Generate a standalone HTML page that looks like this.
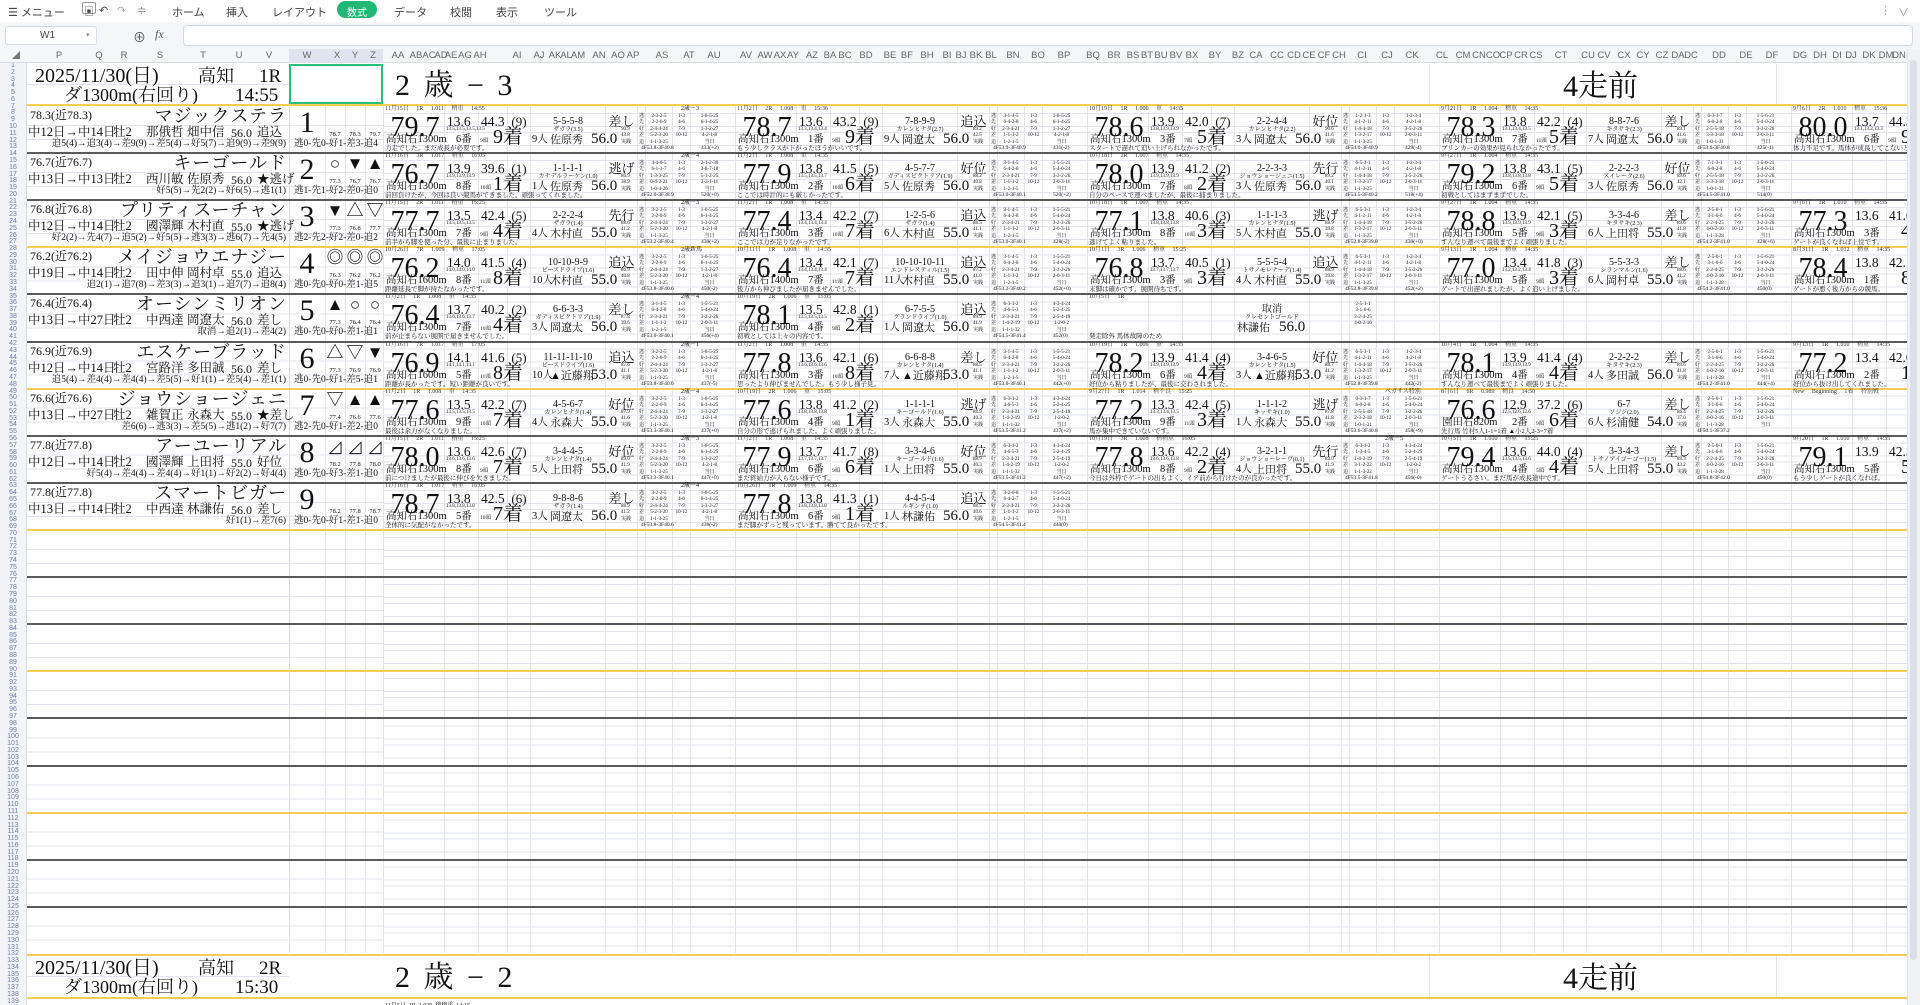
<!DOCTYPE html>
<html lang="ja"><head><meta charset="utf-8">
<style>
*{margin:0;padding:0;box-sizing:border-box}
html,body{width:1920px;height:1005px;overflow:hidden;background:#fff}
body{font-family:"Liberation Serif","Noto Serif CJK SC",serif;color:#111;position:relative}
.ui{font-family:"Liberation Sans","Noto Sans CJK JP",sans-serif}
.abs{position:absolute}
#tb{position:absolute;left:0;top:0;width:1920px;height:22px;background:#fff;font-size:11px;color:#444}
#tb span{position:absolute;top:4px;white-space:nowrap}
#fb{position:absolute;left:0;top:22px;width:1920px;height:27px;background:#f5f6f8}
#ch{position:absolute;left:0;top:49px;width:1920px;height:14px;background:#f5f6f8;border-bottom:1px solid #d8dce4;font-size:9.5px;color:#666}
#ch span{position:absolute;top:1px;transform:translateX(-50%);white-space:nowrap}
#rn{position:absolute;left:0;top:63px;width:27px;height:942px;background:#f3f4f7;border-right:1px solid #d8dce4;font-family:"Liberation Sans",sans-serif;font-size:7px;line-height:6.78px;color:#6b7ea6;text-align:center;overflow:hidden}
#sh{position:absolute;left:27px;top:63px;width:1880px;height:942px;overflow:hidden}
.rbg{position:absolute;left:356px;top:42px;width:1524px;height:848px;
background:
repeating-linear-gradient(180deg,transparent 0 8px,#e1e5ee 8px 9px,transparent 9px 21px,#e1e5ee 21px 22px,transparent 22px 27px,#e1e5ee 27px 28px,transparent 28px 40px,#e1e5ee 40px 41px,transparent 41px 47.1px),
repeating-linear-gradient(90deg,#dfe3ec 0 1px,transparent 1px 61px,#e1e5ee 61px 62px,transparent 62px 95px,#e1e5ee 95px 96px,transparent 96px 124px,#e1e5ee 124px 125px,transparent 125px 147px,#e1e5ee 147px 148px,transparent 148px 222px,#e1e5ee 222px 223px,transparent 223px 254px,#e1e5ee 254px 255px,transparent 255px 262px,#e1e5ee 262px 263px,transparent 263px 289px,#e1e5ee 289px 290px,transparent 290px 307px,#e1e5ee 307px 308px,transparent 308px 352px)}
.lbg{position:absolute;left:0;top:42px;width:356px;height:848px;
background:
repeating-linear-gradient(180deg,transparent 0 20px,#e1e5ee 20px 21px,transparent 21px 34px,#e1e5ee 34px 35px,transparent 35px 47.1px),
linear-gradient(90deg,transparent 0 262px,#d6dbe6 262px 263px,transparent 263px 298px,#e1e5ee 298px 299px,transparent 299px 318px,#e1e5ee 318px 319px,transparent 319px 338px,#e1e5ee 338px 339px,transparent 339px)}
.sep{position:absolute;left:0;width:1880px;height:2px;background:#5a5a5a}
.yel{position:absolute;left:0;width:1880px;height:2px;background:#f7cd5a}
.L{position:absolute;left:0;width:356px;height:47px}
.L span{position:absolute;white-space:nowrap;line-height:1}
.rt{left:3px;top:4px;font-size:12px}
.nm{left:70px;width:190px;text-align:right;top:2px;font-size:18px;letter-spacing:1px}
.i0{left:1px;top:21px;font-size:12.5px}.i1{left:86px;top:21px;font-size:12.5px}.i2{left:119px;top:21px;font-size:12.5px}.i3{left:160px;top:21px;font-size:12.5px}.i4{left:204px;top:22px;font-size:12px}.i5{left:230px;top:21px;font-size:12.5px}
.hs{left:0;width:259px;text-align:right;top:35px;font-size:9.5px}
.hr{left:262px;width:94px;text-align:center;top:35px;font-size:9.5px}
.no{left:262px;width:36px;text-align:center;top:3px;font-size:30px}
.m1,.m2,.m3{top:3px;width:20px;text-align:center;font-size:17px}
.m1{left:298px}.m2{left:318px}.m3{left:338px}
.v1,.v2,.v3{top:27px;width:20px;text-align:center;font-size:6.5px}
.v1{left:298px}.v2{left:318px}.v3{left:338px}
.b{position:absolute;width:352px;height:47px;overflow:hidden}
.b i,.b b,.b span{position:absolute;white-space:nowrap;line-height:1;font-style:normal;font-weight:normal}
.b .t{top:1px;left:2px;font-size:6px;color:#333;word-spacing:6px}
.b .r{top:1px;left:298px;font-size:6px}
.b .g{left:3px;top:9px;font-size:28px;width:58px;text-align:center}
.b .a1{left:64px;top:10px;font-size:13.5px}
.b .a2{left:98px;top:10px;font-size:13.5px}
.b .a3{left:125px;top:10px;font-size:13px;width:22px;text-align:center}
.b .a4{left:148px;top:12px;font-size:10px;width:74px;text-align:center}
.b .a5{left:223px;top:10px;font-size:13px;width:31px;text-align:center}
.b .s{left:63px;top:22px;font-size:5px}
.b .hn{left:148px;top:22px;font-size:6px;width:74px;text-align:center}
.b .p{left:110px;top:22px;font-size:20px}
.b .c{left:3px;top:30px;font-size:10.5px}
.b .n{left:73px;top:30px;font-size:10.5px}
.b .hd{left:97px;top:34px;font-size:5.5px}
.b .j{left:149px;top:30px;font-size:10.5px}
.b .k{left:167px;top:30px;font-size:11px}
.b .w{left:208px;top:27px;font-size:15px}
.b .x{left:238px;top:22px;font-size:5px;line-height:6.3px}
.b .q0,.b .q1,.b .q2,.b .q3{top:9px;font-size:5px;line-height:6.4px;text-align:center}
.b .q0{left:255px;width:7px}.b .q1{left:263px;width:26px}.b .q2{left:290px;width:17px}.b .q3{left:308px;width:37px}
.b .m{left:2px;top:41px;font-size:6.5px}
.b .f{left:258px;top:41px;font-size:5.5px}
.b .f2{left:318px;top:41px;font-size:5.5px}
.rh{position:absolute;left:0;width:1880px;height:42px;background:#fff}
.rh span{position:absolute;white-space:nowrap;line-height:1}
</style></head><body>

<div id="tb" class="ui">
<span style="left:8px">☰ メニュー</span>
<span style="left:82px;top:2px;font-size:10px;border:1px solid #999;border-radius:2px;padding:0 1px;height:12px">▣</span>
<span style="left:99px">↶</span><span style="left:117px;color:#aaa">↷</span><span style="left:137px;color:#999">≑</span>
<span style="left:172px">ホーム</span><span style="left:226px">挿入</span><span style="left:272px">レイアウト</span>
<span style="left:337px;top:1px;width:40px;height:17px;border-radius:9px;background:#21b875;color:#fff;text-align:center;padding-top:3px;font-size:10px">数式</span>
<span style="left:394px">データ</span><span style="left:450px">校閲</span><span style="left:496px">表示</span><span style="left:544px">ツール</span>
<span style="left:1880px;color:#aaa">⋮</span><span style="left:1898px;color:#999">∨</span>
</div>

<div id="fb" class="ui">
<div class="abs" style="left:5px;top:4px;width:92px;height:19px;background:#fff;border:1px solid #d8dce4;border-radius:3px;font-size:10px;color:#444;padding:3px 0 0 34px">W1<span style="position:absolute;left:80px;top:4px;font-size:7px;color:#888">▾</span></div>
<div class="abs" style="left:133px;top:5px;font-size:13px;color:#555">⊕</div>
<div class="abs" style="left:155px;top:5px;font-size:12px;color:#555;font-style:italic;font-family:'Liberation Serif',serif">fx</div>
<div class="abs" style="left:183px;top:3px;width:1730px;height:21px;background:#fff;border:1px solid #d3d8e2;border-radius:4px"></div>
</div>

<div id="ch" class="ui">
<div class="abs" style="left:289px;top:0;width:94px;height:14px;background:#dfe4ee"></div>
<span style="left:16px;color:#777;font-size:8px">◢</span>
<span style="left:59px">P</span><span style="left:99px">Q</span><span style="left:124px">R</span><span style="left:160px">S</span><span style="left:203px">T</span><span style="left:239px">U</span><span style="left:269px">V</span><span style="left:307px">W</span><span style="left:337px">X</span><span style="left:355px">Y</span><span style="left:373px">Z</span>
<span style="left:398px">AA</span><span style="left:416px">AB</span><span style="left:429px">AC</span><span style="left:441px">AD</span><span style="left:451px">AE</span><span style="left:465px">AG</span><span style="left:480px">AH</span><span style="left:517px">AI</span><span style="left:539px">AJ</span><span style="left:555px">AK</span><span style="left:566px">AL</span><span style="left:578px">AM</span><span style="left:599px">AN</span><span style="left:618px">AO</span><span style="left:633px">AP</span><span style="left:662px">AS</span><span style="left:689px">AT</span><span style="left:714px">AU</span><span style="left:746px">AV</span><span style="left:765px">AW</span><span style="left:780px">AX</span><span style="left:793px">AY</span><span style="left:812px">AZ</span><span style="left:830px">BA</span><span style="left:845px">BC</span><span style="left:866px">BD</span><span style="left:890px">BE</span><span style="left:907px">BF</span><span style="left:927px">BH</span><span style="left:947px">BI</span><span style="left:961px">BJ</span><span style="left:976px">BK</span><span style="left:991px">BL</span><span style="left:1013px">BN</span><span style="left:1038px">BO</span><span style="left:1064px">BP</span><span style="left:1093px">BQ</span><span style="left:1114px">BR</span><span style="left:1133px">BS</span><span style="left:1147px">BT</span><span style="left:1161px">BU</span><span style="left:1176px">BV</span><span style="left:1192px">BX</span><span style="left:1215px">BY</span><span style="left:1238px">BZ</span><span style="left:1256px">CA</span><span style="left:1277px">CC</span><span style="left:1294px">CD</span><span style="left:1309px">CE</span><span style="left:1324px">CF</span><span style="left:1339px">CH</span><span style="left:1362px">CI</span><span style="left:1387px">CJ</span><span style="left:1412px">CK</span><span style="left:1442px">CL</span><span style="left:1463px">CM</span><span style="left:1479px">CN</span><span style="left:1493px">CO</span><span style="left:1506px">CP</span><span style="left:1521px">CR</span><span style="left:1536px">CS</span><span style="left:1561px">CT</span><span style="left:1588px">CU</span><span style="left:1604px">CV</span><span style="left:1624px">CX</span><span style="left:1643px">CY</span><span style="left:1662px">CZ</span><span style="left:1678px">DA</span><span style="left:1691px">DC</span><span style="left:1719px">DD</span><span style="left:1746px">DE</span><span style="left:1772px">DF</span><span style="left:1800px">DG</span><span style="left:1820px">DH</span><span style="left:1837px">DI</span><span style="left:1851px">DJ</span><span style="left:1869px">DK</span><span style="left:1886px">DM</span><span style="left:1899px">DN</span>
</div>

<div id="rn">1<br>2<br>3<br>4<br>5<br>6<br>7<br>8<br>9<br>10<br>11<br>12<br>13<br>14<br>15<br>16<br>17<br>18<br>19<br>20<br>21<br>22<br>23<br>24<br>25<br>26<br>27<br>28<br>29<br>30<br>31<br>32<br>33<br>34<br>35<br>36<br>37<br>38<br>39<br>40<br>41<br>42<br>43<br>44<br>45<br>46<br>47<br>48<br>49<br>50<br>51<br>52<br>53<br>54<br>55<br>56<br>57<br>58<br>59<br>60<br>61<br>62<br>63<br>64<br>65<br>66<br>67<br>68<br>69<br>70<br>71<br>72<br>73<br>74<br>75<br>76<br>77<br>78<br>79<br>80<br>81<br>82<br>83<br>84<br>85<br>86<br>87<br>88<br>89<br>90<br>91<br>92<br>93<br>94<br>95<br>96<br>97<br>98<br>99<br>100<br>101<br>102<br>103<br>104<br>105<br>106<br>107<br>108<br>109<br>110<br>111<br>112<br>113<br>114<br>115<br>116<br>117<br>118<br>119<br>120<br>121<br>122<br>123<br>124<br>125<br>126<br>127<br>128<br>129<br>130<br>131<br>132<br>133<br>134<br>135<br>136<br>137<br>138<br>139</div>

<div id="sh">
<div class="lbg"></div><div class="rbg"></div>

<div class="rh" style="top:1px">
<div class="abs" style="left:0;top:20px;width:262px;height:1px;background:#e1e5ee"></div>
<div class="abs" style="left:1402px;top:0;width:1px;height:41px;background:#e1e5ee"></div>
<div class="abs" style="left:1749px;top:0;width:1px;height:41px;background:#e1e5ee"></div>
<span style="left:8px;top:2px;font-size:20px">2025/11/30(日)</span>
<span style="left:171px;top:3px;font-size:18px">高知</span>
<span style="left:232px;top:3px;font-size:19px">1R</span>
<span style="left:37px;top:22px;font-size:18px">ダ1300m(右回り)</span>
<span style="left:208px;top:22px;font-size:19px">14:55</span>
<span style="left:368px;top:7px;font-size:30px;letter-spacing:3px">2 歳 − 3</span>
<span style="left:1536px;top:8px;font-size:30px">4走前</span>
<div class="abs" style="left:262px;top:0;width:94px;height:40px;border:2px solid #2cbf7c"></div>
</div>

<div class="rh" style="top:893px">
<div class="abs" style="left:0;top:20px;width:262px;height:1px;background:#e1e5ee"></div>
<div class="abs" style="left:1402px;top:0;width:1px;height:41px;background:#e1e5ee"></div>
<div class="abs" style="left:1749px;top:0;width:1px;height:41px;background:#e1e5ee"></div>
<span style="left:8px;top:2px;font-size:20px">2025/11/30(日)</span>
<span style="left:171px;top:3px;font-size:18px">高知</span>
<span style="left:232px;top:3px;font-size:19px">2R</span>
<span style="left:37px;top:22px;font-size:18px">ダ1300m(右回り)</span>
<span style="left:208px;top:22px;font-size:19px">15:30</span>
<span style="left:368px;top:7px;font-size:30px;letter-spacing:3px">2 歳 − 2</span>
<span style="left:1536px;top:8px;font-size:30px">4走前</span>
</div>
<div class="abs" style="left:358px;top:937px;font-size:6px;white-space:nowrap">11月5日 &nbsp;1R &nbsp;1.029 &nbsp;稍稍重 &nbsp;14:15</div>

<div class="yel" style="top:41px"></div>
<div class="sep" style="top:89px"></div>
<div class="sep" style="top:136px"></div>
<div class="yel" style="top:183px"></div>
<div class="sep" style="top:230px"></div>
<div class="sep" style="top:278px"></div>
<div class="yel" style="top:325px"></div>
<div class="sep" style="top:372px"></div>
<div class="sep" style="top:419px"></div>
<div class="yel" style="top:466px"></div>
<div class="sep" style="top:513px"></div>
<div class="sep" style="top:560px"></div>
<div class="yel" style="top:607px"></div>
<div class="sep" style="top:654px"></div>
<div class="sep" style="top:702px"></div>
<div class="yel" style="top:749px"></div>
<div class="sep" style="top:796px"></div>
<div class="sep" style="top:843px"></div>
<div class="yel" style="top:891px"></div>
<div class="yel" style="top:934px"></div>

<!-- Horse 1 -->
<div class="L" style="top:42px"><span class="rt">78.3(近78.3)</span><span class="nm">マジックステラ</span><span class="i0">中12日→中14日</span><span class="i1">牡2</span><span class="i2">那俄哲</span><span class="i3">畑中信</span><span class="i4">56.0</span><span class="i5">追込</span><span class="hs">追5(4)→追3(4)→差9(9)→差5(4)→好5(7)→追9(9)→差9(9)</span><span class="hr">逃0-先0-好1-差3-追4</span><span class="no">1</span><span class="v1">78.7</span><span class="v2">78.3</span><span class="v3">79.7</span></div>
<div class="b" style="left:356px;top:42px"><i class="t">11月15日 1R 1.011 稍重 14:55</i><i class="r">2歳－3</i><b class="g">79.7</b><span class="a1">13.6</span><span class="a2">44.3</span><span class="a3">(9)</span><span class="a4">5-5-5-8</span><span class="a5">差し</span><i class="s">13.5,13.5,13.5,13.5</i><i class="hn">ザガラ(3.5)</i><b class="p">9着</b><span class="c">高知右1300m</span><span class="n">6番</span><i class="hd">9頭</i><span class="j">9人</span><span class="k">佐原秀</span><span class="w">56.0</span><i class="x">90.9<br>43.8<br>実践</i><i class="q0">逃<br>先<br>好<br>差<br>追</i><i class="q1">2-3-2-5<br>2-2-6-9<br>2-4-4-24<br>5-2-3-20<br>1-1-3-25</i><i class="q2">1-3<br>4-6<br>7-9<br>10-12</i><i class="q3">1-6-5-25<br>6-1-4-25<br>1-3-2-27<br>4-2-1-8<br>当日</i><i class="m">力走でした。まだ成長が必要です。</i><i class="f">4F53.8-3F40.8</i><i class="f2">433(+2)</i></div>
<div class="b" style="left:708px;top:42px"><i class="t">11月2日 2R 1.008 重 15:36</i><b class="g">78.7</b><span class="a1">13.6</span><span class="a2">43.2</span><span class="a3">(9)</span><span class="a4">7-8-9-9</span><span class="a5">追込</span><i class="s">13.3,13.4,13.4</i><i class="hn">カレンヒナタ(2.7)</i><b class="p">9着</b><span class="c">高知右1300m</span><span class="n">1番</span><i class="hd">9頭</i><span class="j">9人</span><span class="k">岡遼太</span><span class="w">56.0</span><i class="x">89.2<br>42.5<br>実践</i><i class="q0">逃<br>先<br>好<br>差<br>追</i><i class="q1">3-1-4-5<br>6-4-2-8<br>2-3-4-21<br>1-1-1-2<br>1-2-1-5</i><i class="q2">1-3<br>4-6<br>7-9<br>10-12</i><i class="q3">1-6-5-25<br>6-1-4-25<br>1-3-2-27<br>4-2-1-8<br>当日</i><i class="m">もう少しクラスが下がったほうがいいです。</i><i class="f">4F53.9-3F40.9</i><i class="f2">431(-2)</i></div>
<div class="b" style="left:1060px;top:42px"><i class="t">10月19日 1R 1.006 重 14:35</i><b class="g">78.6</b><span class="a1">13.9</span><span class="a2">42.0</span><span class="a3">(7)</span><span class="a4">2-2-4-4</span><span class="a5">好位</span><i class="s">13.8,13.9,13.9</i><i class="hn">カレンヒナタ(2.2)</i><b class="p">5着</b><span class="c">高知右1300m</span><span class="n">3番</span><i class="hd">7頭</i><span class="j">3人</span><span class="k">岡遼太</span><span class="w">56.0</span><i class="x">90.6<br>41.6<br>実践</i><i class="q0">逃<br>先<br>好<br>差<br>追</i><i class="q1">1-2-1-3<br>4-1-2-11<br>1-4-4-18<br>1-3-2-17<br>1-1-3-25</i><i class="q2">1-3<br>4-6<br>7-9<br>10-12</i><i class="q3">1-2-3-4<br>4-2-1-8<br>3-5-2-26<br>2-0-3-11<br>当日</i><i class="m">スタートで遅れて追い上げられなかったです。</i><i class="f">4F54.0-3F40.9</i><i class="f2">429(-4)</i></div>
<div class="b" style="left:1412px;top:42px"><i class="t">9月21日 1R 1.004 稍重 14:35</i><b class="g">78.3</b><span class="a1">13.8</span><span class="a2">42.2</span><span class="a3">(4)</span><span class="a4">8-8-7-6</span><span class="a5">差し</span><i class="s">13.1,13.4,13.5</i><i class="hn">キタサキ(2.3)</i><b class="p">5着</b><span class="c">高知右1300m</span><span class="n">7番</span><i class="hd">11頭</i><span class="j">7人</span><span class="k">岡遼太</span><span class="w">56.0</span><i class="x">89.1<br>41.6<br>実践</i><i class="q0">逃<br>先<br>好<br>差<br>追</i><i class="q1">6-3-1-7<br>6-0-2-8<br>2-5-5-18<br>3-3-3-18<br>1-0-1-31</i><i class="q2">1-3<br>4-6<br>7-9<br>10-12</i><i class="q3">1-5-6-21<br>5-4-0-24<br>3-2-2-26<br>2-0-3-11<br>当日</i><i class="m">ブリンカーの効果が見られなかったです。</i><i class="f">4F53.6-3F40.8</i><i class="f2">425(-1)</i></div>
<div class="b" style="left:1764px;top:42px"><i class="t">9月6日 2R 1.010 稍重 15:36</i><b class="g">80.0</b><span class="a1">13.7</span><span class="a2">44.3</span><span class="a3">(6)</span><span class="a4">6-6-6-6</span><span class="a5">差し</span><i class="s">13.1,13.2,13.3</i><i class="hn">ペガサス(2.1)</i><b class="p">9着</b><span class="c">高知右1300m</span><span class="n">6番</span><i class="hd">9頭</i><i class="m">体力不足です。馬体が成長してこないと</i></div>

<!-- Horse 2 -->
<div class="L" style="top:89px"><span class="rt">76.7(近76.7)</span><span class="nm">キーゴールド</span><span class="i0">中13日→中13日</span><span class="i1">牡2</span><span class="i2">西川敏</span><span class="i3">佐原秀</span><span class="i4">56.0</span><span class="i5">★逃げ</span><span class="hs">好5(5)→先2(2)→好6(5)→逃1(1)</span><span class="hr">逃1-先1-好2-差0-追0</span><span class="no">2</span><span class="m1">○</span><span class="m2">▼</span><span class="m3">▲</span><span class="v1">77.3</span><span class="v2">76.7</span><span class="v3">76.7</span></div>
<div class="b" style="left:356px;top:89px"><i class="t">11月16日 3R 1.017 稍重 16:05</i><i class="r">2歳－4</i><b class="g">76.7</b><span class="a1">13.9</span><span class="a2">39.6</span><span class="a3">(1)</span><span class="a4">1-1-1-1</span><span class="a5">逃げ</span><i class="s">13.9,13.9,13.9</i><i class="hn">カナデルラーケン(1.0)</i><b class="p">1着</b><span class="c">高知右1300m</span><span class="n">8番</span><i class="hd">10頭</i><span class="j">1人</span><span class="k">佐原秀</span><span class="w">56.0</span><i class="x">86.9<br>38.9<br>実践</i><i class="q0">逃<br>先<br>好<br>差<br>追</i><i class="q1">4-4-0-5<br>6-1-3-7<br>1-3-3-25<br>0-4-2-21<br>1-0-4-26</i><i class="q2">1-3<br>4-6<br>7-9<br>10-12</i><i class="q3">2-1-2-30<br>3-8-7-18<br>5-1-2-25<br>2-2-1-11<br>当日</i><i class="m">前回負けたが、今回は良い競馬ができました。頑張ってくれました。</i><i class="f">4F52.0-3F38.9</i><i class="f2">520(+0)</i></div>
<div class="b" style="left:708px;top:89px"><i class="t">11月2日 1R 1.008 重 14:35</i><b class="g">77.9</b><span class="a1">13.8</span><span class="a2">41.5</span><span class="a3">(5)</span><span class="a4">4-5-7-7</span><span class="a5">好位</span><i class="s">13.5,13.5,13.7</i><i class="hn">ガディスビクトリア(1.9)</i><b class="p">6着</b><span class="c">高知右1300m</span><span class="n">2番</span><i class="hd">10頭</i><span class="j">5人</span><span class="k">佐原秀</span><span class="w">56.0</span><i class="x">88.2<br>40.8<br>実践</i><i class="q0">逃<br>先<br>好<br>差<br>追</i><i class="q1">3-1-4-5<br>6-4-2-8<br>2-3-4-21<br>1-1-1-2<br>1-2-1-5</i><i class="q2">1-3<br>4-6<br>7-9<br>10-12</i><i class="q3">1-5-5-21<br>5-4-0-24<br>3-2-2-26<br>2-0-3-11<br>当日</i><i class="m">ここでは時計的にも厳しかったです。</i><i class="f">4F53.0-3F40.1</i><i class="f2">520(+2)</i></div>
<div class="b" style="left:1060px;top:89px"><i class="t">10月18日 2R 1.007 稍重 14:35</i><b class="g">78.0</b><span class="a1">13.9</span><span class="a2">41.2</span><span class="a3">(2)</span><span class="a4">2-2-3-3</span><span class="a5">先行</span><i class="s">13.9,13.9,13.9</i><i class="hn">ジョウショージェニ(1.5)</i><b class="p">2着</b><span class="c">高知右1300m</span><span class="n">7番</span><i class="hd">8頭</i><span class="j">3人</span><span class="k">佐原秀</span><span class="w">56.0</span><i class="x">89.2<br>40.1<br>実践</i><i class="q0">逃<br>先<br>好<br>差<br>追</i><i class="q1">6-5-3-1<br>4-1-2-11<br>1-4-4-18<br>1-3-2-17<br>1-1-3-25</i><i class="q2">1-3<br>4-6<br>7-9<br>10-12</i><i class="q3">1-2-3-4<br>4-2-1-8<br>3-5-2-26<br>2-0-3-11<br>当日</i><i class="m">自分のペースで運べましたが、最後に捕まりました。</i><i class="f">4F53.5-3F40.2</i><i class="f2">518(+4)</i></div>
<div class="b" style="left:1412px;top:89px"><i class="t">9月27日 1R 1.004 稍重 14:35</i><b class="g">79.2</b><span class="a1">13.8</span><span class="a2">43.1</span><span class="a3">(5)</span><span class="a4">2-2-2-3</span><span class="a5">好位</span><i class="s">13.8,13.8,13.8</i><i class="hn">スイレーク(2.6)</i><b class="p">5着</b><span class="c">高知右1300m</span><span class="n">6番</span><i class="hd">9頭</i><span class="j">3人</span><span class="k">佐原秀</span><span class="w">56.0</span><i class="x">89.6<br>42.1<br>実践</i><i class="q0">逃<br>先<br>好<br>差<br>追</i><i class="q1">7-1-3-1<br>6-0-2-8<br>2-5-5-18<br>3-3-3-18<br>1-0-1-31</i><i class="q2">1-3<br>4-6<br>7-9<br>10-12</i><i class="q3">1-5-6-21<br>5-4-0-24<br>3-2-2-26<br>2-0-3-11<br>当日</i><i class="m">初戦としてはまずまずでした。</i><i class="f">4F54.5-3F41.0</i><i class="f2">514(0)</i></div>

<!-- Horse 3 -->
<div class="L" style="top:136px"><span class="rt">76.8(近76.8)</span><span class="nm">プリティスーチャン</span><span class="i0">中12日→中14日</span><span class="i1">牡2</span><span class="i2">國澤輝</span><span class="i3">木村直</span><span class="i4">55.0</span><span class="i5">★逃げ</span><span class="hs">好2(2)→先4(7)→追5(2)→好5(5)→逃3(3)→逃6(7)→先4(5)</span><span class="hr">逃2-先2-好2-差0-追2</span><span class="no">3</span><span class="m1">▼</span><span class="m2">△</span><span class="m3">▽</span><span class="v1">77.3</span><span class="v2">76.8</span><span class="v3">77.7</span></div>
<div class="b" style="left:356px;top:136px"><i class="t">11月15日 2R 1.011 稍重 15:25</i><i class="r">2歳－3</i><b class="g">77.7</b><span class="a1">13.5</span><span class="a2">42.4</span><span class="a3">(5)</span><span class="a4">2-2-2-4</span><span class="a5">先行</span><i class="s">13.5,13.5,13.5</i><i class="hn">ザガラ(1.4)</i><b class="p">4着</b><span class="c">高知右1300m</span><span class="n">7番</span><i class="hd">9頭</i><span class="j">4人</span><span class="k">木村直</span><span class="w">55.0</span><i class="x">88.6<br>41.2<br>実践</i><i class="q0">逃<br>先<br>好<br>差<br>追</i><i class="q1">3-2-2-5<br>2-2-0-9<br>2-4-4-24<br>5-2-3-20<br>1-1-3-25</i><i class="q2">1-3<br>4-6<br>7-9<br>10-12</i><i class="q3">1-6-5-25<br>6-1-4-25<br>1-3-2-27<br>4-2-1-8<br>当日</i><i class="m">前半から脚を使った分、最後に止まりました。</i><i class="f">4F53.2-3F40.4</i><i class="f2">430(+2)</i></div>
<div class="b" style="left:708px;top:136px"><i class="t">11月2日 1R 1.008 重 14:35</i><b class="g">77.4</b><span class="a1">13.4</span><span class="a2">42.2</span><span class="a3">(7)</span><span class="a4">1-2-5-6</span><span class="a5">追込</span><i class="s">13.4,13.4,13.4</i><i class="hn">ザガラ(1.4)</i><b class="p">7着</b><span class="c">高知右1300m</span><span class="n">3番</span><i class="hd">10頭</i><span class="j">6人</span><span class="k">木村直</span><span class="w">55.0</span><i class="x">88.5<br>41.1<br>実践</i><i class="q0">逃<br>先<br>好<br>差<br>追</i><i class="q1">3-1-4-5<br>6-4-2-8<br>2-3-4-21<br>1-1-1-2<br>1-2-1-5</i><i class="q2">1-3<br>4-6<br>7-9<br>10-12</i><i class="q3">1-5-5-21<br>5-4-0-24<br>3-2-2-26<br>2-0-3-11<br>当日</i><i class="m">ここでは力が足りなかったです。</i><i class="f">4F53.0-3F40.1</i><i class="f2">428(-2)</i></div>
<div class="b" style="left:1060px;top:136px"><i class="t">10月18日 1R 1.007 稍重 14:35</i><b class="g">77.1</b><span class="a1">13.8</span><span class="a2">40.6</span><span class="a3">(3)</span><span class="a4">1-1-1-3</span><span class="a5">逃げ</span><i class="s">13.8,13.8,13.8</i><i class="hn">カレンヒナタ(1.5)</i><b class="p">3着</b><span class="c">高知右1300m</span><span class="n">8番</span><i class="hd">10頭</i><span class="j">5人</span><span class="k">木村直</span><span class="w">55.0</span><i class="x">88.9<br>39.8<br>実践</i><i class="q0">逃<br>先<br>好<br>差<br>追</i><i class="q1">6-5-3-1<br>4-1-2-11<br>1-4-4-18<br>1-3-2-17<br>1-1-3-25</i><i class="q2">1-3<br>4-6<br>7-9<br>10-12</i><i class="q3">1-2-3-4<br>4-2-1-8<br>3-5-2-26<br>2-0-3-11<br>当日</i><i class="m">逃げてよく粘りました。</i><i class="f">4F52.8-3F39.8</i><i class="f2">430(+0)</i></div>
<div class="b" style="left:1412px;top:136px"><i class="t">9月27日 1R 1.004 稍重 14:35</i><b class="g">78.8</b><span class="a1">13.9</span><span class="a2">42.1</span><span class="a3">(5)</span><span class="a4">3-3-4-6</span><span class="a5">差し</span><i class="s">13.9,13.9,13.9</i><i class="hn">キタサキ(2.3)</i><b class="p">3着</b><span class="c">高知右1300m</span><span class="n">5番</span><i class="hd">9頭</i><span class="j">6人</span><span class="k">上田将</span><span class="w">55.0</span><i class="x">89.6<br>41.8<br>実践</i><i class="q0">逃<br>先<br>好<br>差<br>追</i><i class="q1">2-5-0-1<br>3-1-0-6<br>2-2-4-25<br>4-0-2-16<br>1-1-3-28</i><i class="q2">1-3<br>4-6<br>7-9<br>10-12</i><i class="q3">1-5-6-21<br>5-4-0-24<br>3-2-2-26<br>2-0-3-11<br>当日</i><i class="m">すんなり運べて最後までよく頑張りました。</i><i class="f">4F54.2-3F41.0</i><i class="f2">428(+6)</i></div>
<div class="b" style="left:1764px;top:136px"><i class="t">9月6日 1R 1.010 稍重 14:35</i><b class="g">77.3</b><span class="a1">13.6</span><span class="a2">41.6</span><span class="a3">(4)</span><span class="a4">2-2-2-2</span><span class="a5">先行</span><span class="c">高知右1300m</span><span class="n">3番</span><b class="p">4着</b><i class="m">ゲートが良くなれば上位です。</i></div>

<!-- Horse 4 -->
<div class="L" style="top:183px"><span class="rt">76.2(近76.2)</span><span class="nm">メイジョウエナジー</span><span class="i0">中19日→中14日</span><span class="i1">牡2</span><span class="i2">田中伸</span><span class="i3">岡村卓</span><span class="i4">55.0</span><span class="i5">追込</span><span class="hs">追2(1)→追7(8)→差3(3)→追3(1)→追7(7)→追8(4)</span><span class="hr">逃0-先0-好0-差1-追5</span><span class="no">4</span><span class="m1">◎</span><span class="m2">◎</span><span class="m3">◎</span><span class="v1">76.3</span><span class="v2">76.2</span><span class="v3">76.2</span></div>
<div class="b" style="left:356px;top:183px"><i class="t">10月26日 7R 1.009 稍重 17:05</i><i class="r">2歳新馬</i><b class="g">76.2</b><span class="a1">14.0</span><span class="a2">41.5</span><span class="a3">(4)</span><span class="a4">10-10-9-9</span><span class="a5">追込</span><i class="s">14.0,14.0,14.0</i><i class="hn">ビースドライブ(1.6)</i><b class="p">8着</b><span class="c">高知右1600m</span><span class="n">8番</span><i class="hd">11頭</i><span class="j">10人</span><span class="k">木村直</span><span class="w">55.0</span><i class="x">86.9<br>40.8<br>実践</i><i class="q0">逃<br>先<br>好<br>差<br>追</i><i class="q1">3-2-2-5<br>2-2-0-9<br>2-4-4-24<br>5-2-3-20<br>1-1-3-25</i><i class="q2">1-3<br>4-6<br>7-9<br>10-12</i><i class="q3">1-6-5-25<br>6-1-4-25<br>1-3-2-27<br>4-2-1-8<br>当日</i><i class="m">距離延長で脚が持たなかったです。</i><i class="f">4F53.8-3F40.6</i><i class="f2">450(-2)</i></div>
<div class="b" style="left:708px;top:183px"><i class="t">10月11日 1R 1.008 重 14:35</i><b class="g">76.4</b><span class="a1">13.4</span><span class="a2">42.1</span><span class="a3">(7)</span><span class="a4">10-10-10-11</span><span class="a5">追込</span><i class="s">13.4,13.4,13.4</i><i class="hn">エンドレスティル(1.5)</i><b class="p">7着</b><span class="c">高知右1400m</span><span class="n">7番</span><i class="hd">11頭</i><span class="j">11人</span><span class="k">木村直</span><span class="w">55.0</span><i class="x">87.2<br>41.0<br>実践</i><i class="q0">逃<br>先<br>好<br>差<br>追</i><i class="q1">3-1-4-5<br>6-4-2-8<br>2-3-4-21<br>1-1-1-2<br>1-2-1-5</i><i class="q2">1-3<br>4-6<br>7-9<br>10-12</i><i class="q3">1-5-5-21<br>5-4-0-24<br>3-2-2-26<br>2-0-3-11<br>当日</i><i class="m">後方から伸びましたが届きませんでした。</i><i class="f">4F53.2-3F40.2</i><i class="f2">452(+0)</i></div>
<div class="b" style="left:1060px;top:183px"><i class="t">10月1日 3R 1.006 稍重 15:25</i><b class="g">76.8</b><span class="a1">13.7</span><span class="a2">40.5</span><span class="a3">(1)</span><span class="a4">5-5-5-4</span><span class="a5">追込</span><i class="s">13.7,13.7,13.7</i><i class="hn">トサノモレナーデ(1.4)</i><b class="p">3着</b><span class="c">高知右1300m</span><span class="n">3番</span><i class="hd">9頭</i><span class="j">4人</span><span class="k">木村直</span><span class="w">55.0</span><i class="x">88.9<br>39.8<br>実践</i><i class="q0">逃<br>先<br>好<br>差<br>追</i><i class="q1">6-5-3-1<br>4-1-2-11<br>1-4-4-18<br>1-3-2-17<br>1-1-3-25</i><i class="q2">1-3<br>4-6<br>7-9<br>10-12</i><i class="q3">1-2-3-4<br>4-2-1-8<br>3-5-2-26<br>2-0-3-11<br>当日</i><i class="m">末脚は確かです。展開待ちです。</i><i class="f">4F52.8-3F39.8</i><i class="f2">452(+2)</i></div>
<div class="b" style="left:1412px;top:183px"><i class="t">9月13日 1R 1.004 稍重 14:35</i><b class="g">77.0</b><span class="a1">13.4</span><span class="a2">41.8</span><span class="a3">(3)</span><span class="a4">5-5-3-3</span><span class="a5">差し</span><i class="s">13.2,13.2,13.4</i><i class="hn">シランマルン(1.6)</i><b class="p">3着</b><span class="c">高知右1300m</span><span class="n">5番</span><i class="hd">9頭</i><span class="j">6人</span><span class="k">岡村卓</span><span class="w">55.0</span><i class="x">88.6<br>41.2<br>実践</i><i class="q0">逃<br>先<br>好<br>差<br>追</i><i class="q1">2-5-0-1<br>3-1-0-6<br>2-2-4-25<br>4-0-2-16<br>1-1-3-28</i><i class="q2">1-3<br>4-6<br>7-9<br>10-12</i><i class="q3">1-5-6-21<br>5-4-0-24<br>3-2-2-26<br>2-0-3-11<br>当日</i><i class="m">ゲートで出遅れましたが、よく追い上げました。</i><i class="f">4F54.2-3F41.0</i><i class="f2">450(0)</i></div>
<div class="b" style="left:1764px;top:183px"><i class="t">8月31日 1R 1.012 稍重 14:35</i><b class="g">78.4</b><span class="a1">13.8</span><span class="a2">42.1</span><span class="a3">(1)</span><span class="a4">9-9-8-8</span><span class="a5">追込</span><span class="c">高知右1300m</span><span class="n">1番</span><b class="p">8着</b><i class="m">ゲートが悪く後方からの競馬。</i></div>

<!-- Horse 5 -->
<div class="L" style="top:230px"><span class="rt">76.4(近76.4)</span><span class="nm">オーシンミリオン</span><span class="i0">中13日→中27日</span><span class="i1">牡2</span><span class="i2">中西達</span><span class="i3">岡遼太</span><span class="i4">56.0</span><span class="i5">差し</span><span class="hs">取消→追2(1)→差4(2)</span><span class="hr">逃0-先0-好0-差1-追1</span><span class="no">5</span><span class="m1">▲</span><span class="m2">○</span><span class="m3">○</span><span class="v1">77.3</span><span class="v2">76.4</span><span class="v3">76.4</span></div>
<div class="b" style="left:356px;top:230px"><i class="t">11月2日 1R 1.008 重 14:35</i><i class="r">2歳－4</i><b class="g">76.4</b><span class="a1">13.7</span><span class="a2">40.2</span><span class="a3">(2)</span><span class="a4">6-6-3-3</span><span class="a5">差し</span><i class="s">13.6,13.6,13.7</i><i class="hn">ガディスビクトリア(1.9)</i><b class="p">4着</b><span class="c">高知右1300m</span><span class="n">7番</span><i class="hd">10頭</i><span class="j">3人</span><span class="k">岡遼太</span><span class="w">56.0</span><i class="x">87.8<br>39.6<br>実践</i><i class="q0">逃<br>先<br>好<br>差<br>追</i><i class="q1">3-1-4-5<br>6-4-2-8<br>2-3-4-21<br>1-1-1-2<br>1-2-1-5</i><i class="q2">1-3<br>4-6<br>7-9<br>10-12</i><i class="q3">1-5-5-21<br>5-4-0-24<br>3-2-2-26<br>2-0-3-11<br>当日</i><i class="m">前が止まらない展開で届きませんでした。</i><i class="f">4F53.0-3F40.1</i><i class="f2">456(+4)</i></div>
<div class="b" style="left:708px;top:230px"><i class="t">10月19日 2R 1.006 重 15:05</i><b class="g">78.1</b><span class="a1">13.5</span><span class="a2">42.8</span><span class="a3">(1)</span><span class="a4">6-7-5-5</span><span class="a5">追込</span><i class="s">13.5,13.5,13.5</i><i class="hn">グランドライブ(1.0)</i><b class="p">2着</b><span class="c">高知右1300m</span><span class="n">4番</span><i class="hd">9頭</i><span class="j">1人</span><span class="k">岡遼太</span><span class="w">56.0</span><i class="x">89.9<br>41.9<br>実践</i><i class="q0">逃<br>先<br>好<br>差<br>追</i><i class="q1">6-3-1-2<br>4-6-5-3<br>2-3-4-21<br>1-4-2-19<br>1-1-1-32</i><i class="q2">1-3<br>4-6<br>7-9<br>10-12</i><i class="q3">4-3-4-24<br>5-2-4-25<br>2-5-4-19<br>1-2-0-2<br>当日</i><i class="m">初戦としては上々の内容です。</i><i class="f">4F54.5-3F41.4</i><i class="f2">452(0)</i></div>
<div class="b" style="left:1060px;top:230px"><i class="t">10月5日 1R</i><span class="a4" style="left:130px;width:110px;top:12px;font-size:10px">取消</span><i class="hn" style="left:130px;width:110px;top:22px">クレセントゴールド</i><span class="k" style="left:150px">林謙佑</span><span class="w" style="left:192px">56.0</span><i class="q1" style="left:263px">2-5-1-1<br>3-1-0-6<br>2-2-4-25<br>4-0-2-16</i><i class="m">発走除外 馬体故障のため</i></div>

<!-- Horse 6 -->
<div class="L" style="top:278px"><span class="rt">76.9(近76.9)</span><span class="nm">エスケーブラッド</span><span class="i0">中12日→中14日</span><span class="i1">牡2</span><span class="i2">宮路洋</span><span class="i3">多田誠</span><span class="i4">56.0</span><span class="i5">差し</span><span class="hs">追5(4)→差4(4)→差4(4)→差5(5)→好1(1)→差5(4)→差1(1)</span><span class="hr">逃0-先0-好1-差5-追1</span><span class="no">6</span><span class="m1">△</span><span class="m2">▽</span><span class="m3">▼</span><span class="v1">77.3</span><span class="v2">76.9</span><span class="v3">76.9</span></div>
<div class="b" style="left:356px;top:278px"><i class="t">11月16日 7R 1.017 稍重 17:05</i><i class="r">2歳－1</i><b class="g">76.9</b><span class="a1">14.1</span><span class="a2">41.6</span><span class="a3">(5)</span><span class="a4">11-11-11-10</span><span class="a5">追込</span><i class="s">14.1,14.1,14.1</i><i class="hn">ビースドライブ(1.6)</i><b class="p">8着</b><span class="c">高知右1600m</span><span class="n">5番</span><i class="hd">11頭</i><span class="j">10人</span><span class="k">▲近藤翔</span><span class="w">53.0</span><i class="x">87.6<br>41.1<br>実践</i><i class="q0">逃<br>先<br>好<br>差<br>追</i><i class="q1">3-2-2-5<br>2-2-0-9<br>2-4-4-24<br>5-2-3-20<br>1-1-3-25</i><i class="q2">1-3<br>4-6<br>7-9<br>10-12</i><i class="q3">1-6-5-25<br>6-1-4-25<br>1-3-2-27<br>4-2-1-8<br>当日</i><i class="m">距離が長かったです。短い距離が良いです。</i><i class="f">4F53.8-3F40.6</i><i class="f2">437(-5)</i></div>
<div class="b" style="left:708px;top:278px"><i class="t">11月2日 1R 1.008 重 14:35</i><b class="g">77.8</b><span class="a1">13.6</span><span class="a2">42.1</span><span class="a3">(6)</span><span class="a4">6-6-8-8</span><span class="a5">差し</span><i class="s">13.6,13.6,13.6</i><i class="hn">カレンヒナタ(1.4)</i><b class="p">8着</b><span class="c">高知右1300m</span><span class="n">3番</span><i class="hd">10頭</i><span class="j">7人</span><span class="k">▲近藤翔</span><span class="w">53.0</span><i class="x">88.5<br>41.1<br>実践</i><i class="q0">逃<br>先<br>好<br>差<br>追</i><i class="q1">3-1-4-5<br>6-4-2-8<br>2-3-4-21<br>1-1-1-2<br>1-2-1-5</i><i class="q2">1-3<br>4-6<br>7-9<br>10-12</i><i class="q3">1-5-5-21<br>5-4-0-24<br>3-2-2-26<br>2-0-3-11<br>当日</i><i class="m">思ったより伸びませんでした。もう少し様子見。</i><i class="f">4F53.0-3F40.1</i><i class="f2">442(+0)</i></div>
<div class="b" style="left:1060px;top:278px"><i class="t">10月19日 1R 1.006 重 14:35</i><b class="g">78.2</b><span class="a1">13.9</span><span class="a2">41.4</span><span class="a3">(4)</span><span class="a4">3-4-6-5</span><span class="a5">好位</span><i class="s">13.9,13.9,13.9</i><i class="hn">カレンヒナタ(1.5)</i><b class="p">4着</b><span class="c">高知右1300m</span><span class="n">6番</span><i class="hd">9頭</i><span class="j">3人</span><span class="k">▲近藤翔</span><span class="w">53.0</span><i class="x">88.7<br>41.2<br>実践</i><i class="q0">逃<br>先<br>好<br>差<br>追</i><i class="q1">6-5-3-1<br>4-1-2-11<br>1-4-4-18<br>1-3-2-17<br>1-1-3-25</i><i class="q2">1-3<br>4-6<br>7-9<br>10-12</i><i class="q3">1-2-3-4<br>4-2-1-8<br>3-5-2-26<br>2-0-3-11<br>当日</i><i class="m">好位から粘りましたが、最後に交わされました。</i><i class="f">4F52.8-3F39.8</i><i class="f2">442(-2)</i></div>
<div class="b" style="left:1412px;top:278px"><i class="t">10月4日 1R 1.004 稍重 14:35</i><b class="g">78.1</b><span class="a1">13.9</span><span class="a2">41.4</span><span class="a3">(4)</span><span class="a4">2-2-2-2</span><span class="a5">差し</span><i class="s">13.9,13.9,13.9</i><i class="hn">キタサキ(2.3)</i><b class="p">4着</b><span class="c">高知右1300m</span><span class="n">4番</span><i class="hd">9頭</i><span class="j">4人</span><span class="k">多田誠</span><span class="w">56.0</span><i class="x">89.6<br>41.8<br>実践</i><i class="q0">逃<br>先<br>好<br>差<br>追</i><i class="q1">2-5-0-1<br>3-1-0-6<br>2-2-4-25<br>4-0-2-16<br>1-1-3-28</i><i class="q2">1-3<br>4-6<br>7-9<br>10-12</i><i class="q3">1-5-6-21<br>5-4-0-24<br>3-2-2-26<br>2-0-3-11<br>当日</i><i class="m">すんなり運べて最後までよく頑張りました。</i><i class="f">4F54.2-3F41.0</i><i class="f2">444(+4)</i></div>
<div class="b" style="left:1764px;top:278px"><i class="t">9月13日 1R 1.010 稍重 14:35</i><b class="g">77.2</b><span class="a1">13.4</span><span class="a2">42.0</span><span class="a3">(5)</span><span class="a4">3-3-2-1</span><span class="a5">好位</span><span class="c">高知右1300m</span><span class="n">2番</span><b class="p">1着</b><i class="m">好位から抜け出してくれました。</i></div>

<!-- Horse 7 -->
<div class="L" style="top:325px"><span class="rt">76.6(近76.6)</span><span class="nm">ジョウショージェニ</span><span class="i0">中13日→中27日</span><span class="i1">牡2</span><span class="i2">雑賀正</span><span class="i3">永森大</span><span class="i4">55.0</span><span class="i5">★差し</span><span class="hs">差6(6)→逃3(3)→差5(5)→逃1(2)→好7(7)</span><span class="hr">逃2-先0-好1-差2-追0</span><span class="no">7</span><span class="m1">▽</span><span class="m2">▲</span><span class="m3">▲</span><span class="v1">77.4</span><span class="v2">76.6</span><span class="v3">77.6</span></div>
<div class="b" style="left:356px;top:325px"><i class="t">11月2日 1R 1.008 重 14:35</i><i class="r">2歳－4</i><b class="g">77.6</b><span class="a1">13.5</span><span class="a2">42.2</span><span class="a3">(7)</span><span class="a4">4-5-6-7</span><span class="a5">好位</span><i class="s">13.5,13.5,13.5</i><i class="hn">カレンヒナタ(1.4)</i><b class="p">7着</b><span class="c">高知右1300m</span><span class="n">9番</span><i class="hd">10頭</i><span class="j">4人</span><span class="k">永森大</span><span class="w">55.0</span><i class="x">87.9<br>41.6<br>実践</i><i class="q0">逃<br>先<br>好<br>差<br>追</i><i class="q1">3-2-2-5<br>2-2-0-9<br>2-4-4-24<br>5-2-3-20<br>1-1-3-25</i><i class="q2">1-3<br>4-6<br>7-9<br>10-12</i><i class="q3">1-6-5-25<br>6-1-4-25<br>1-3-2-27<br>4-2-1-8<br>当日</i><i class="m">最後は余力がなくなりました。</i><i class="f">4F53.3-3F40.1</i><i class="f2">437(+0)</i></div>
<div class="b" style="left:708px;top:325px"><i class="t">10月19日 2R 1.006 重 15:05</i><b class="g">77.6</b><span class="a1">13.8</span><span class="a2">41.2</span><span class="a3">(2)</span><span class="a4">1-1-1-1</span><span class="a5">逃げ</span><i class="s">13.8,13.8,13.8</i><i class="hn">キーゴールド(1.6)</i><b class="p">1着</b><span class="c">高知右1300m</span><span class="n">4番</span><i class="hd">9頭</i><span class="j">3人</span><span class="k">永森大</span><span class="w">55.0</span><i class="x">88.9<br>40.3<br>実践</i><i class="q0">逃<br>先<br>好<br>差<br>追</i><i class="q1">6-3-1-2<br>4-6-5-3<br>2-3-4-21<br>1-4-2-19<br>1-1-1-32</i><i class="q2">1-3<br>4-6<br>7-9<br>10-12</i><i class="q3">4-3-4-24<br>5-2-4-25<br>2-5-4-19<br>1-2-0-2<br>当日</i><i class="m">自分の形で逃げられました。よく頑張りました。</i><i class="f">4F53.5-3F41.2</i><i class="f2">437(+2)</i></div>
<div class="b" style="left:1060px;top:325px"><i class="t">9月27日 1R 1.014 稍不良 15:25</i><i class="r">ペガサス特別</i><b class="g">77.2</b><span class="a1">13.3</span><span class="a2">42.4</span><span class="a3">(5)</span><span class="a4">1-1-1-2</span><span class="a5">逃げ</span><i class="s">13.3,13.4,13.5</i><i class="hn">キッサキ(1.0)</i><b class="p">3着</b><span class="c">高知右1300m</span><span class="n">9番</span><i class="hd">11頭</i><span class="j">1人</span><span class="k">永森大</span><span class="w">55.0</span><i class="x">87.8<br>41.8<br>実践</i><i class="q0">逃<br>先<br>好<br>差<br>追</i><i class="q1">0-3-1-7<br>6-0-2-8<br>2-5-5-18<br>2-3-2-18<br>1-0-1-31</i><i class="q2">1-3<br>4-6<br>7-9<br>10-12</i><i class="q3">1-5-6-21<br>5-4-0-24<br>3-2-2-26<br>2-0-3-11<br>当日</i><i class="m">馬が集中できていないです。</i><i class="f">4F53.6-3F40.8</i><i class="f2">458(+9)</i></div>
<div class="b" style="left:1412px;top:325px"><i class="t">8月6日 6R 0.989 稍良 14:50</i><b class="g">76.6</b><span class="a1">12.9</span><span class="a2">37.2</span><span class="a3">(6)</span><span class="a4">6-7</span><span class="a5">差し</span><i class="s">12.5,12.6,12.6</i><i class="hn">ソジジ(2.0)</i><b class="p">6着</b><span class="c">園田右820m</span><span class="n">2番</span><i class="hd">9頭</i><span class="j">6人</span><span class="k">杉浦健</span><span class="w">54.0</span><i class="x">86.4<br>37.0<br>実践</i><i class="q0">逃<br>先<br>好<br>差<br>追</i><i class="q1">2-5-0-1<br>3-1-0-6<br>2-2-4-25<br>4-0-2-16<br>1-1-3-28</i><i class="q2">1-3<br>4-6<br>7-9<br>10-12</i><i class="q3">1-5-6-21<br>5-4-0-24<br>3-2-2-26<br>2-0-3-11<br>当日</i><i class="m">先行馬 竹村5人1-1=1着 ▲小2人2-3=7着</i><i class="f">4F50.1-3F37.2</i></div>
<div class="b" style="left:1764px;top:325px"><i class="t">New Beginning 1着 特別戦</i></div>

<!-- Horse 8 -->
<div class="L" style="top:372px"><span class="rt">77.8(近77.8)</span><span class="nm">アーユーリアル</span><span class="i0">中12日→中14日</span><span class="i1">牡2</span><span class="i2">國澤輝</span><span class="i3">上田将</span><span class="i4">55.0</span><span class="i5">好位</span><span class="hs">好5(4)→差4(4)→差4(4)→好1(1)→好2(2)→好4(4)</span><span class="hr">逃0-先0-好3-差1-追0</span><span class="no">8</span><span class="m1">◿</span><span class="m2">◿</span><span class="m3">◿</span><span class="v1">78.2</span><span class="v2">77.8</span><span class="v3">78.0</span></div>
<div class="b" style="left:356px;top:372px"><i class="t">11月15日 2R 1.011 稍重 15:25</i><i class="r">2歳－3</i><b class="g">78.0</b><span class="a1">13.6</span><span class="a2">42.6</span><span class="a3">(7)</span><span class="a4">3-4-4-5</span><span class="a5">好位</span><i class="s">13.6,13.6,13.6</i><i class="hn">カレンヒナタ(1.4)</i><b class="p">7着</b><span class="c">高知右1300m</span><span class="n">8番</span><i class="hd">9頭</i><span class="j">5人</span><span class="k">上田将</span><span class="w">55.0</span><i class="x">89.0<br>41.9<br>実践</i><i class="q0">逃<br>先<br>好<br>差<br>追</i><i class="q1">3-2-2-5<br>2-2-0-9<br>2-4-4-24<br>5-2-3-20<br>1-1-3-25</i><i class="q2">1-3<br>4-6<br>7-9<br>10-12</i><i class="q3">1-6-5-25<br>6-1-4-25<br>1-3-2-27<br>4-2-1-8<br>当日</i><i class="m">前につけましたが最後に伸びを欠きました。</i><i class="f">4F53.3-3F40.1</i><i class="f2">447(+0)</i></div>
<div class="b" style="left:708px;top:372px"><i class="t">11月2日 1R 1.008 重 14:35</i><b class="g">77.9</b><span class="a1">13.7</span><span class="a2">41.7</span><span class="a3">(8)</span><span class="a4">3-3-4-6</span><span class="a5">好位</span><i class="s">13.7,13.7,13.7</i><i class="hn">キーゴールド(1.6)</i><b class="p">6着</b><span class="c">高知右1300m</span><span class="n">6番</span><i class="hd">9頭</i><span class="j">1人</span><span class="k">上田将</span><span class="w">55.0</span><i class="x">88.9<br>40.3<br>実践</i><i class="q0">逃<br>先<br>好<br>差<br>追</i><i class="q1">6-3-1-2<br>4-6-5-3<br>2-3-4-21<br>1-4-2-19<br>1-1-1-32</i><i class="q2">1-3<br>4-6<br>7-9<br>10-12</i><i class="q3">4-3-4-24<br>5-2-4-25<br>2-5-4-19<br>1-2-0-2<br>当日</i><i class="m">まだ終始力が入らない様子です。</i><i class="f">4F53.5-3F41.2</i><i class="f2">447(+2)</i></div>
<div class="b" style="left:1060px;top:372px"><i class="t">10月19日 3R 1.008 稍稍重 16:05</i><i class="r">2歳－5</i><b class="g">77.8</b><span class="a1">13.6</span><span class="a2">42.2</span><span class="a3">(4)</span><span class="a4">3-2-1-1</span><span class="a5">先行</span><i class="s">13.6,13.6,13.8</i><i class="hn">ジョウショーレーヴ(0.1)</i><b class="p">2着</b><span class="c">高知右1300m</span><span class="n">8番</span><i class="hd">9頭</i><span class="j">4人</span><span class="k">上田将</span><span class="w">55.0</span><i class="x">89.0<br>41.9<br>実践</i><i class="q0">逃<br>先<br>好<br>差<br>追</i><i class="q1">6-3-1-2<br>1-3-4-5<br>1-4-2-19<br>3-1-2-22<br>1-1-3-22</i><i class="q2">1-3<br>4-6<br>7-9<br>10-12</i><i class="q3">4-3-4-24<br>5-2-4-25<br>2-5-4-19<br>1-2-0-2<br>当日</i><i class="m">今日は外枠でゲートの出もよく、イア前から行けたのが良かったです。</i><i class="f">4F53.5-3F41.8</i><i class="f2">456(-0)</i></div>
<div class="b" style="left:1412px;top:372px"><i class="t">10月5日 1R 1.010 稍重 15:25</i><b class="g">79.4</b><span class="a1">13.6</span><span class="a2">44.0</span><span class="a3">(4)</span><span class="a4">3-3-4-3</span><span class="a5">差し</span><i class="s">13.5,13.5,13.6</i><i class="hn">トサノアイゴーゴー(1.5)</i><b class="p">4着</b><span class="c">高知右1300m</span><span class="n">4番</span><i class="hd">5頭</i><span class="j">5人</span><span class="k">上田将</span><span class="w">55.0</span><i class="x">89.3<br>43.2<br>実践</i><i class="q0">逃<br>先<br>好<br>差<br>追</i><i class="q1">2-5-0-1<br>3-1-0-6<br>2-2-4-25<br>4-0-2-16<br>1-1-3-28</i><i class="q2">1-3<br>4-6<br>7-9<br>10-12</i><i class="q3">1-5-6-21<br>5-4-0-24<br>3-2-2-26<br>2-0-3-11<br>当日</i><i class="m">ゲートうるさい。まだ馬が成長途中です。</i><i class="f">4F54.8-3F42.0</i><i class="f2">450(0)</i></div>
<div class="b" style="left:1764px;top:372px"><i class="t">9月20日 1R 1.010 稍重 14:35</i><b class="g">79.1</b><span class="a1">13.9</span><span class="a2">42.5</span><span class="a3">(5)</span><span class="a4">2-2-3-3</span><span class="a5">好位</span><span class="c">高知右1300m</span><span class="n">5番</span><b class="p">5着</b><i class="m">もう少しゲートが良くなれば。</i></div>

<!-- Horse 9 -->
<div class="L" style="top:419px"><span class="rt">77.8(近77.8)</span><span class="nm">スマートビガー</span><span class="i0">中13日→中14日</span><span class="i1">牡2</span><span class="i2">中西達</span><span class="i3">林謙佑</span><span class="i4">56.0</span><span class="i5">差し</span><span class="hs">好1(1)→差7(6)</span><span class="hr">逃0-先0-好1-差1-追0</span><span class="no">9</span><span class="v1">78.2</span><span class="v2">77.8</span><span class="v3">78.7</span></div>
<div class="b" style="left:356px;top:419px"><i class="t">11月16日 3R 1.017 稍重 16:05</i><i class="r">2歳－4</i><b class="g">78.7</b><span class="a1">13.8</span><span class="a2">42.5</span><span class="a3">(6)</span><span class="a4">9-8-8-6</span><span class="a5">差し</span><i class="s">13.8,13.8,13.8</i><i class="hn">ザガラ(1.4)</i><b class="p">7着</b><span class="c">高知右1300m</span><span class="n">5番</span><i class="hd">10頭</i><span class="j">3人</span><span class="k">岡遼太</span><span class="w">56.0</span><i class="x">88.9<br>41.2<br>実践</i><i class="q0">逃<br>先<br>好<br>差<br>追</i><i class="q1">3-2-2-5<br>2-2-0-9<br>2-4-4-24<br>5-2-3-20<br>1-1-3-25</i><i class="q2">1-3<br>4-6<br>7-9<br>10-12</i><i class="q3">1-6-5-25<br>6-1-4-25<br>1-3-2-27<br>4-2-1-8<br>当日</i><i class="m">全体的に気配がなかったです。</i><i class="f">4F53.8-3F40.6</i><i class="f2">438(-2)</i></div>
<div class="b" style="left:708px;top:419px"><i class="t">10月26日 1R 1.009 稍重 14:35</i><b class="g">77.8</b><span class="a1">13.8</span><span class="a2">41.3</span><span class="a3">(1)</span><span class="a4">4-4-5-4</span><span class="a5">追込</span><i class="s">13.8,13.8,13.8</i><i class="hn">ルギンチ(1.0)</i><b class="p">1着</b><span class="c">高知右1300m</span><span class="n">6番</span><i class="hd">9頭</i><span class="j">1人</span><span class="k">林謙佑</span><span class="w">56.0</span><i class="x">88.5<br>40.6<br>実践</i><i class="q0">逃<br>先<br>好<br>差<br>追</i><i class="q1">3-2-0-8<br>6-4-2-7<br>2-3-4-21<br>1-1-1-2<br>1-2-1-5</i><i class="q2">1-3<br>4-6<br>7-9<br>10-12</i><i class="q3">1-5-5-21<br>5-4-0-24<br>3-2-2-26<br>2-0-3-11<br>当日</i><i class="m">まだ脚がずっと残っています。勝てて良かったです。</i><i class="f">4F54.5-3F41.4</i><i class="f2">440(0)</i></div>
</div>

<div class="abs" style="left:1907px;top:49px;width:13px;height:956px;background:#f1f2f5;border-left:1px solid #e2e5ec"></div>
<div class="abs" style="left:1910px;top:60px;width:7px;height:900px;background:#dcdfe6;border-radius:4px"></div>
</body></html>
